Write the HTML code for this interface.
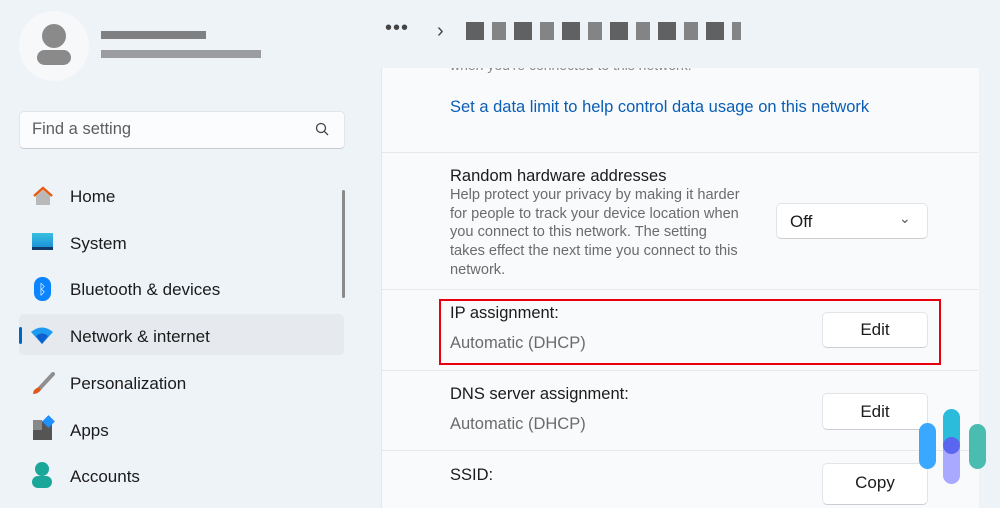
<!DOCTYPE html>
<html><head><style>
body{margin:0;width:1000px;height:498px;overflow:hidden;background:#eef3f8;font-family:"Liberation Sans",sans-serif;position:relative;color:#1b1b1b}
.a{position:absolute}
.nav{position:absolute;left:70px;font-size:17px;color:#1b1b1b}
.blur{position:absolute;background:#333;height:8px}
.panel{position:absolute;left:381px;top:68px;width:597px;height:440px;background:#f9fafc;border-left:1px solid #e5e7ea}
.sep{position:absolute;left:381px;width:597px;height:1px;background:#e6e8eb}
.btn{position:absolute;background:#fff;border:1px solid #e2e4e7;border-bottom-color:#ccced1;border-radius:5px;font-size:17px;text-align:center;color:#1b1b1b}
.t{position:absolute;left:450px;font-size:16.5px}
.g{color:#6b6b6b}
</style></head><body>
<div class="a" style="left:19px;top:11px;width:70px;height:70px;border-radius:50%;background:#f7f8f9"></div>
<div class="a" style="left:42px;top:24px;width:24px;height:24px;border-radius:50%;background:#8a8a8a"></div>
<div class="a" style="left:37px;top:50px;width:34px;height:15px;border-radius:8px;background:#8a8a8a"></div>
<div class="blur" style="left:101px;top:31px;width:105px;opacity:.6"></div>
<div class="blur" style="left:101px;top:50px;width:160px;opacity:.45"></div>
<div class="a" style="left:19px;top:111px;width:324px;height:36px;background:#fbfcfd;border:1px solid #e3e5e8;border-bottom-color:#c8cacd;border-radius:5px"></div>
<div class="a" style="left:32px;top:120px;font-size:16.5px;color:#5d5d5d">Find a setting</div>
<svg class="a" style="left:315px;top:122px" width="14" height="14"><circle cx="6" cy="6" r="4.5" fill="none" stroke="#444" stroke-width="1.3"/><line x1="9.3" y1="9.3" x2="13" y2="13" stroke="#444" stroke-width="1.3"/></svg>
<div class="a" style="left:342px;top:190px;width:3px;height:108px;background:#8a8a8a;border-radius:2px"></div>
<div class="a" style="left:19px;top:314px;width:325px;height:41px;background:#e6eaee;border-radius:5px"></div>
<div class="a" style="left:19px;top:327px;width:3px;height:17px;background:#0067c0;border-radius:2px"></div>
<svg class="a" style="left:31px;top:185px" width="24" height="22"><path d="M3 11 L12 3 L21 11" fill="none" stroke="#e55b14" stroke-width="2.5"/><path d="M5 11 L12 5 L19 11 V20 H5Z" fill="#b9b9b9"/></svg>
<div class="nav" style="top:187px">Home</div>
<div class="a" style="left:32px;top:233px;width:21px;height:16px;background:linear-gradient(#37c0e0,#1a8cd8)"></div>
<div class="a" style="left:32px;top:247px;width:21px;height:3px;background:#123a6a"></div>
<div class="nav" style="top:234px">System</div>
<div class="a" style="left:34px;top:277px;width:17px;height:24px;border-radius:8px;background:#0a84ff;color:#fff;font-size:14px;text-align:center;line-height:24px">ᛒ</div>
<div class="nav" style="top:280px">Bluetooth &amp; devices</div>
<svg class="a" style="left:30px;top:326px" width="24" height="20"><path d="M1 6 Q12 -3 23 6 L12 18Z" fill="#1e9bf0"/><path d="M6 10 Q12 5 18 10 L12 18Z" fill="#0f5fcf"/></svg>
<div class="nav" style="top:327px">Network &amp; internet</div>
<svg class="a" style="left:31px;top:372px" width="24" height="24"><path d="M22 2 L9 16" stroke="#8f8f8f" stroke-width="4" stroke-linecap="round"/><path d="M8 15 Q2 17 2 22 Q7 22 10 18Z" fill="#e0581a"/></svg>
<div class="nav" style="top:374px">Personalization</div>
<div class="a" style="left:33px;top:421px;width:19px;height:19px;background:#555"></div>
<div class="a" style="left:33px;top:420px;width:9px;height:10px;background:#888"></div>
<div class="a" style="left:44px;top:417px;width:9px;height:9px;background:#1e90ff;transform:rotate(45deg)"></div>
<div class="nav" style="top:421px">Apps</div>
<div class="a" style="left:35px;top:462px;width:14px;height:14px;border-radius:50%;background:#1aa79a"></div>
<div class="a" style="left:32px;top:476px;width:20px;height:12px;border-radius:6px;background:#1aa79a"></div>
<div class="nav" style="top:467px">Accounts</div>

<div class="a" style="left:385px;top:17px;font-size:20px;color:#444;letter-spacing:1px">•••</div>
<div class="a" style="left:437px;top:20px;font-size:20px;color:#444">›</div>
<div class="blur" style="left:466px;top:22px;width:275px;height:18px;opacity:.7;background:repeating-linear-gradient(90deg,#222 0 18px,#eef3f8 18px 26px,#555 26px 40px,#eef3f8 40px 48px)"></div>

<div class="panel"></div>
<div class="a" style="left:450px;top:68px;width:300px;height:5px;overflow:hidden"><div class="a" style="left:0;top:-11px;font-size:14px;color:#888;white-space:nowrap">when you're connected to this network.</div></div>
<div class="t" style="top:98px;color:#0a5fb4">Set a data limit to help control data usage on this network</div>
<div class="sep" style="top:152px"></div>
<div class="t" style="top:167px">Random hardware addresses</div>
<div class="a g" style="left:450px;top:186px;font-size:14.6px;line-height:18.7px;width:292px">Help protect your privacy by making it harder for people to track your device location when you connect to this network. The setting takes effect the next time you connect to this network.</div>
<div class="btn" style="left:776px;top:203px;width:150px;height:34px;text-align:left"><span class="a" style="left:13px;top:8px">Off</span><span class="a" style="left:122px;top:6px;font-size:14px;color:#555">⌄</span></div>
<div class="sep" style="top:289px"></div>
<div class="t" style="top:304px">IP assignment:</div>
<div class="t g" style="top:334px">Automatic (DHCP)</div>
<div class="btn" style="left:822px;top:312px;width:104px;height:34px;line-height:34px">Edit</div>
<div class="a" style="left:439px;top:299px;width:498px;height:62px;border:2px solid #e8000e"></div>
<div class="sep" style="top:370px"></div>
<div class="t" style="top:385px">DNS server assignment:</div>
<div class="t g" style="top:415px">Automatic (DHCP)</div>
<div class="btn" style="left:822px;top:393px;width:104px;height:35px;line-height:35px">Edit</div>
<div class="sep" style="top:450px"></div>
<div class="t" style="top:466px">SSID:</div>
<div class="btn" style="left:822px;top:463px;width:104px;height:40px;line-height:38px">Copy</div>

<div class="a" style="left:919px;top:423px;width:17px;height:46px;border-radius:9px;background:#3aa8ff"></div>
<div class="a" style="left:943px;top:409px;width:17px;height:42px;border-radius:9px;background:#2bbcdc"></div>
<div class="a" style="left:943px;top:440px;width:17px;height:44px;border-radius:9px;background:#a9a9ff"></div>
<div class="a" style="left:943px;top:437px;width:17px;height:17px;border-radius:50%;background:#5a66f0"></div>
<div class="a" style="left:969px;top:424px;width:17px;height:45px;border-radius:9px;background:#4bbcb0"></div>
</body></html>
